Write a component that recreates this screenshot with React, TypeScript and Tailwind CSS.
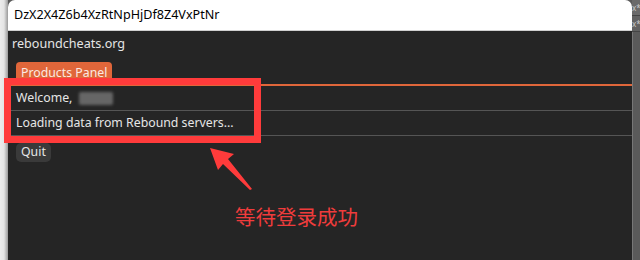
export default function App() {
  const font = { fontFamily: '"Noto Sans", "Open Sans", sans-serif' };
  return (
    <div className="relative flex h-[260px] w-[640px] overflow-hidden bg-[#5a5a5a]" style={font}>
      {/* desktop edge on the left */}
      <div className="w-[8px] shrink-0 bg-gradient-to-r from-[#ececec] via-[#e4e4e4] to-[#9a9a9a]" />

      {/* window */}
      <div className="flex w-[624px] shrink-0 flex-col">
        <div className="flex h-[31px] items-center rounded-t-[7px] border-b border-[#d0d0d0] bg-white pl-[6px] pt-[1px] text-[12.6px] text-black">
          DzX2X4Z6b4XzRtNpHjDf8Z4VxPtNr
        </div>
        <div className="flex flex-1 flex-col bg-[#252525] text-[12.3px] text-[#e6e6e6]">
          <div className="flex h-[24px] items-center pl-[4px] pt-[2px] text-[12.6px]">reboundcheats.org</div>
          <div className="mt-[7px] flex h-[24px] items-end border-b-2 border-[#e0663a] pl-[8px]">
            <div className="flex h-[22px] items-center rounded-t-[4px] bg-[#e0663a] px-[5px] text-[#fbe9e2]">
              Products Panel
            </div>
          </div>
          <div className="flex h-[25px] items-center border-b border-[#555] pl-[8px]">
            <span>Welcome,</span>
            <span className="ml-[7px] h-[13px] w-[34px] rounded-[2px] bg-[#666] blur-[1.5px]" />
          </div>
          <div className="flex h-[25px] items-center border-b border-[#555] pl-[8px]">
            Loading data from Rebound servers...
          </div>
          <div className="mt-[7px] pl-[8px]">
            <button className="flex h-[19px] items-center rounded-[5px] bg-[#3a3a3a] px-[5px] text-[#e6e6e6]">
              Quit
            </button>
          </div>
        </div>
      </div>

      {/* desktop edge on the right */}
      <div className="flex w-[8px] shrink-0 flex-col">
        <div className="h-[16px] border-b border-[#444] bg-[#6a6a6a] text-[8px] leading-[16px] text-[#ccc]">x*</div>
        <div className="h-[16px] border-b border-[#444] bg-[#626262] text-[8px] leading-[16px] text-[#ccc]">x*</div>
        <div className="flex-1 border-l border-[#777] bg-[#5a5a5a]" />
      </div>

      {/* annotation overlays */}
      <div className="absolute left-[4px] top-[78px] h-[65px] w-[257px] border-[7px] border-[#ff3b3b]" />
      <svg className="absolute left-[200px] top-[140px]" width="60" height="60" viewBox="0 0 60 60">
        <polygon points="10,8 34,14 28,19 52,49 50,50 23,24 18,30" fill="#ff3b3b" />
      </svg>
      <div
        className="absolute left-[235px] top-[202px] text-[20.5px] leading-[28px] text-[#f03c3c]"
        style={{ fontFamily: '"Noto Sans CJK SC", sans-serif' }}
      >
        等待登录成功
      </div>
    </div>
  );
}
